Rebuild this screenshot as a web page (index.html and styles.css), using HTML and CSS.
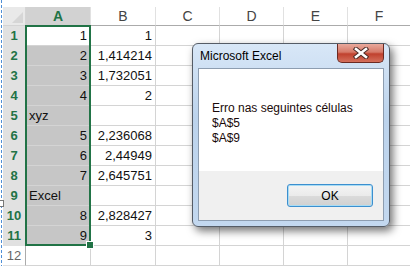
FILE: index.html
```html
<!DOCTYPE html>
<html lang="pt">
<head>
    <meta charset="UTF-8">
    <title>Microsoft Excel</title>
    <link rel="stylesheet" href="styles.css">
</head>
<body>

    <div class="sheet">
        <div class="grid">
            <div class="corner"><span class="tri"></span></div>
            <div class="colhead sel">A</div>
            <div class="colhead">B</div>
            <div class="colhead">C</div>
            <div class="colhead">D</div>
            <div class="colhead">E</div>
            <div class="colhead">F</div>

            <div class="rowhead sel">1</div><div class="cell num active">1</div><div class="cell num">1</div><div class="cell"></div><div class="cell"></div><div class="cell"></div><div class="cell"></div>
            <div class="rowhead sel">2</div><div class="cell num pick">2</div><div class="cell num">1,414214</div><div class="cell"></div><div class="cell"></div><div class="cell"></div><div class="cell"></div>
            <div class="rowhead sel">3</div><div class="cell num pick">3</div><div class="cell num">1,732051</div><div class="cell"></div><div class="cell"></div><div class="cell"></div><div class="cell"></div>
            <div class="rowhead sel">4</div><div class="cell num pick">4</div><div class="cell num">2</div><div class="cell"></div><div class="cell"></div><div class="cell"></div><div class="cell"></div>
            <div class="rowhead sel">5</div><div class="cell pick">xyz</div><div class="cell"></div><div class="cell"></div><div class="cell"></div><div class="cell"></div><div class="cell"></div>
            <div class="rowhead sel">6</div><div class="cell num pick">5</div><div class="cell num">2,236068</div><div class="cell"></div><div class="cell"></div><div class="cell"></div><div class="cell"></div>
            <div class="rowhead sel">7</div><div class="cell num pick">6</div><div class="cell num">2,44949</div><div class="cell"></div><div class="cell"></div><div class="cell"></div><div class="cell"></div>
            <div class="rowhead sel">8</div><div class="cell num pick">7</div><div class="cell num">2,645751</div><div class="cell"></div><div class="cell"></div><div class="cell"></div><div class="cell"></div>
            <div class="rowhead sel">9</div><div class="cell pick">Excel</div><div class="cell"></div><div class="cell"></div><div class="cell"></div><div class="cell"></div><div class="cell"></div>
            <div class="rowhead sel">10</div><div class="cell num pick">8</div><div class="cell num">2,828427</div><div class="cell"></div><div class="cell"></div><div class="cell"></div><div class="cell"></div>
            <div class="rowhead sel">11</div><div class="cell num pick">9</div><div class="cell num">3</div><div class="cell"></div><div class="cell"></div><div class="cell"></div><div class="cell"></div>
            <div class="rowhead">12</div><div class="cell"></div><div class="cell"></div><div class="cell"></div><div class="cell"></div><div class="cell"></div><div class="cell"></div>
        </div>

        <!-- selection outline over A1:A11 -->
        <div class="selection"><span class="handle"></span></div>
        <span class="edge-grip"></span>
    </div>

    <div class="dialog">
        <div class="title">Microsoft Excel</div>
        <button class="close" type="button">
            <svg width="16" height="12" viewBox="0 0 16 12">
                <path d="M3 2 L13 10 M13 2 L3 10" stroke="#4a2a26" stroke-width="4.5" stroke-linecap="square"/>
                <path d="M3 2 L13 10 M13 2 L3 10" stroke="#fff" stroke-width="2.6" stroke-linecap="square"/>
            </svg>
        </button>
        <div class="client">
            <div class="message">
                <div>Erro nas seguintes células</div>
                <div>$A$5</div>
                <div>$A$9</div>
            </div>
            <div class="buttons">
                <button class="ok" type="button">OK</button>
            </div>
        </div>
    </div>

</body>
</html>
```

FILE: styles.css
```css
body {
    margin: 0;
    width: 410px;
    height: 267px;
    overflow: hidden;
    background: #fff;
    font-family: "Liberation Sans", Arial, sans-serif;
    position: relative;
}
.sheet {
    position: relative;
    padding: 7px 0 0 3px;
    background: repeating-linear-gradient(to bottom, #4f8fd6 0 3px, transparent 3px 5px) 1px 0 / 1px 100% no-repeat;
}
.grid {
    display: grid;
    grid-template-columns: 23px 65px 65px 64px 64px 64px 63px;
    grid-template-rows: 19px;
    grid-auto-rows: 20px;
}
.grid > div {
    box-sizing: border-box;
    border-right: 1px solid #d4d4d4;
    border-bottom: 1px solid #d4d4d4;
}
.corner {
    background: #e9e9e9;
    position: relative;
}
.tri {
    position: absolute;
    right: 2px;
    bottom: 2px;
    width: 0;
    height: 0;
    border-left: 11px solid transparent;
    border-bottom: 11px solid #d6d6d6;
}
.colhead {
    font-size: 14px;
    color: #444;
    text-align: center;
    line-height: 18px;
    background: #fff;
    border-right-color: #e1e1e1 !important;
    border-bottom-color: #ababab !important;
}
.colhead.sel {
    background: #d2d2d2;
    color: #217346;
    font-weight: bold;
}
.rowhead {
    font-size: 13px;
    color: #666;
    text-align: center;
    line-height: 19px;
    background: #fff;
    border-right-color: #ababab !important;
    border-bottom-color: #e1e1e1 !important;
}
.rowhead.sel {
    background: #e1e1e1;
    color: #217346;
    font-weight: bold;
}
.cell {
    font-size: 13px;
    color: #111;
    line-height: 19px;
    padding: 0 3px;
    white-space: nowrap;
}
.num {
    text-align: right;
}
.pick {
    background: #c6c6c6;
}
.selection {
    position: absolute;
    left: 25px;
    top: 25px;
    width: 66px;
    height: 221px;
    box-sizing: border-box;
    border: 2px solid #217346;
}
.handle {
    position: absolute;
    right: -5px;
    bottom: -5px;
    width: 6px;
    height: 6px;
    background: #217346;
    border: 1px solid #fff;
}
.edge-grip {
    position: absolute;
    left: 0;
    top: 200px;
    width: 3px;
    height: 5px;
    background: #fff;
    border: 1px solid #777;
    border-left: none;
}

/* message box */
.dialog {
    position: absolute;
    left: 192px;
    top: 43px;
    width: 198px;
    height: 184px;
    box-sizing: border-box;
    border: 1px solid #555c66;
    border-radius: 6px;
    background: linear-gradient(to bottom, #d8e7f7, #bcd3ec 40%, #c3d8ef);
    box-shadow: 3px 4px 9px rgba(0, 0, 0, 0.55);
    font-family: "Liberation Sans", Arial, sans-serif;
    font-size: 12px;
    color: #000;
}
.title {
    position: absolute;
    left: 7px;
    top: 5px;
    line-height: 15px;
}
.close {
    position: absolute;
    right: 5px;
    top: 0;
    width: 47px;
    height: 19px;
    padding: 0;
    border: 1px solid #6b2a22;
    border-top: none;
    border-radius: 0 0 5px 5px;
    background: linear-gradient(to bottom, #e9a99c, #d67a69 45%, #c0412e 55%, #d4705c);
    display: flex;
    align-items: center;
    justify-content: center;
}
.client {
    position: absolute;
    left: 5px;
    right: 5px;
    top: 24px;
    bottom: 5px;
    border: 1px solid #8d9db0;
    background: #f0f0f0;
    display: flex;
    flex-direction: column;
}
.message {
    background: #fff;
    height: 102px;
    box-sizing: border-box;
    padding: 32px 0 0 13px;
    line-height: 15px;
    color: #1a0a0a;
}
.buttons {
    padding: 13px 10px 0 0;
    display: flex;
    justify-content: flex-end;
}
.ok {
    width: 86px;
    height: 23px;
    font-family: "Liberation Sans", Arial, sans-serif;
    font-size: 12px;
    color: #000;
    border: 1px solid #3c8fcf;
    border-radius: 3px;
    background: linear-gradient(to bottom, #f4f4f4, #ebebeb 50%, #dbdbdb 51%, #d0d0d0);
    box-shadow: inset 0 0 0 1px #a8dcf4;
    padding: 0;
}
```
